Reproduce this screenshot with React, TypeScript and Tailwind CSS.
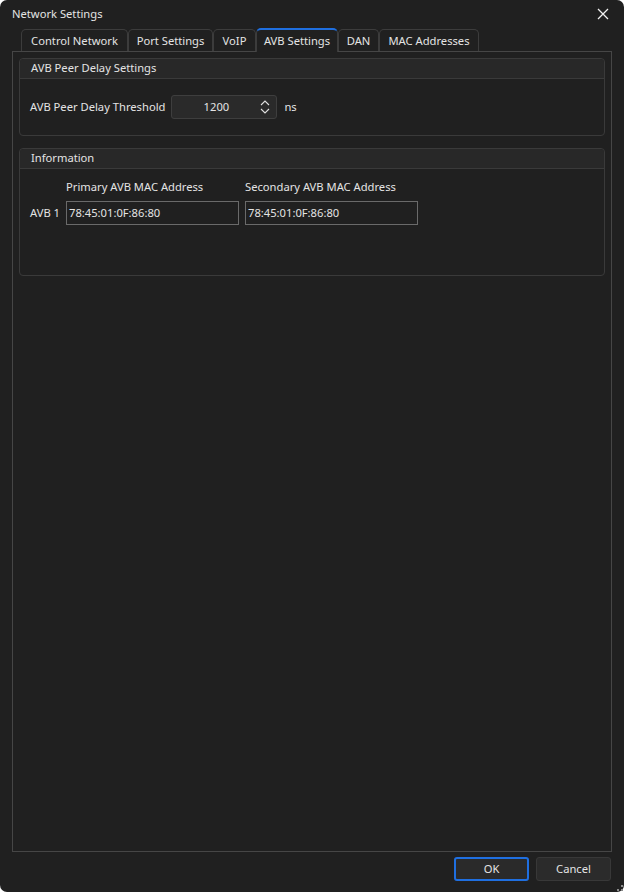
const tabs = [
  { label: "Control Network", w: "w-[107px]" },
  { label: "Port Settings", w: "w-[85px]" },
  { label: "VoIP", w: "w-[43px]" },
  { label: "AVB Settings", w: "w-[82px]", active: true },
  { label: "DAN", w: "w-[41px]" },
  { label: "MAC Addresses", w: "w-[100px]" },
];

function GroupBox({ title, className, children }: { title: string; className: string; children: React.ReactNode }) {
  return (
    <div className={`border border-[#3a3a3a] rounded-[4px] flex flex-col ${className}`}>
      <div className="h-[20px] bg-[#282828] border-b border-[#3a3a3a] rounded-t-[4px] pl-[11px] flex items-center">
        {title}
      </div>
      {children}
    </div>
  );
}

export default function App() {
  return (
    <div className="w-[624px] h-[892px] bg-white">
      <div
        className="h-full bg-[#202020] rounded-[7px] flex flex-col text-[11.2px] text-[#e4e4e4]"
        style={{ fontFamily: "'Noto Sans', 'Open Sans', sans-serif" }}
      >
        {/* title bar */}
        <div className="h-[28px] flex items-center justify-between pl-[12px] pr-[15px]">
          <span>Network Settings</span>
          <svg width="12" height="12" viewBox="0 0 12 12" className="text-[#f0f0f0]">
            <path d="M1 1L11 11M11 1L1 11" stroke="currentColor" strokeWidth="1.3" />
          </svg>
        </div>

        {/* tabs */}
        <div className="h-[23px] pl-[21px] flex items-end relative z-10">
          {tabs.map((t) =>
            t.active ? (
              <div
                key={t.label}
                className={`${t.w} h-[24px] -mb-px bg-[#202020] border-x border-[#3c3c3c] border-t-2 border-t-[#1f6fe0] rounded-t-[5px] flex items-center justify-center pt-[1px]`}
              >
                {t.label}
              </div>
            ) : (
              <div
                key={t.label}
                className={`${t.w} h-[22px] border border-b-0 border-[#3c3c3c] rounded-t-[5px] flex items-center justify-center pt-[2px]`}
              >
                {t.label}
              </div>
            )
          )}
        </div>

        {/* pane */}
        <div className="mx-[12px] h-[801px] border border-[#464646] px-[6px] pt-[6px] flex flex-col gap-[12px]">
          <GroupBox title="AVB Peer Delay Settings" className="h-[78px]">
            <div className="flex-1 flex items-center pl-[10px]">
              <span>AVB Peer Delay Threshold</span>
              <div className="ml-[6px] w-[106px] h-[24px] bg-[#2a2a2a] border border-[#3e3e3e] rounded-[3px] flex items-center">
                <span className="flex-1 text-center">1200</span>
                <svg width="10" height="16" viewBox="0 0 10 16" className="mr-[6px] text-[#e0e0e0]">
                  <path d="M1 6L5 2L9 6M1 10L5 14L9 10" fill="none" stroke="currentColor" strokeWidth="1.1" />
                </svg>
              </div>
              <span className="ml-[7px]">ns</span>
            </div>
          </GroupBox>

          <GroupBox title="Information" className="h-[128px]">
            <div className="pl-[10px] pt-[9px] flex">
              <div className="w-[36px] pt-[27px]">AVB 1</div>
              <div className="flex gap-[6px]">
                {["Primary AVB MAC Address", "Secondary AVB MAC Address"].map((l) => (
                  <div key={l} className="flex flex-col gap-[5px]">
                    <span className="h-[18px] leading-[18px]">{l}</span>
                    <div className="w-[173px] h-[24px] border border-[#6a6a6a] bg-[#202020] flex items-center pl-[2px]">
                      78:45:01:0F:86:80
                    </div>
                  </div>
                ))}
              </div>
            </div>
          </GroupBox>
        </div>

        {/* buttons */}
        <div className="flex justify-end gap-[7px] pr-[13px] pt-[5px]">
          <button className="w-[75px] h-[24px] border-2 border-[#1f6fe0] bg-[#2a2a2a] rounded-[3px] text-[#e4e4e4]">
            OK
          </button>
          <button className="w-[75px] h-[24px] border border-[#383838] bg-[#2b2b2b] rounded-[3px] text-[#e4e4e4]">
            Cancel
          </button>
        </div>
        <div className="flex justify-end pr-[1px] pt-[4px]">
          <svg width="6" height="6" viewBox="0 0 6 6" className="text-[#8a8a8a]">
            <rect x="4" y="0" width="2" height="2" fill="currentColor" />
            <rect x="0" y="4" width="2" height="2" fill="currentColor" />
            <rect x="4" y="4" width="2" height="2" fill="currentColor" />
          </svg>
        </div>
      </div>
    </div>
  );
}
